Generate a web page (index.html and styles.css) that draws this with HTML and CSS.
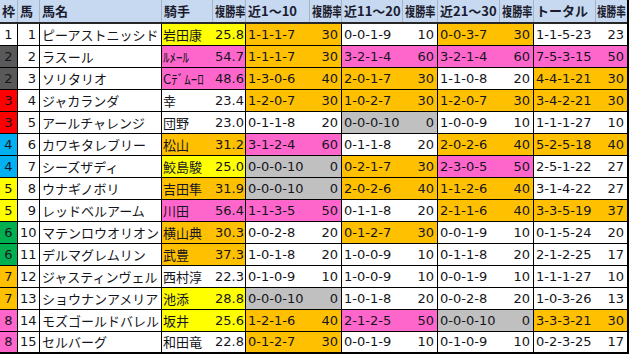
FILE: index.html
```html
<!DOCTYPE html>
<html lang="ja">
<head>
<meta charset="utf-8">
<title>出走表</title>
<link rel="stylesheet" href="styles.css">
</head>
<body>
<div class="sheet">
  <div class="row head">
    <span class="c">枠</span><span class="c">馬</span><span class="c">馬名</span><span class="c">騎手</span><span class="c"><span class="sq">複勝率</span></span><span class="c">近1～10</span><span class="c"><span class="sq">複勝率</span></span><span class="c">近11～20</span><span class="c"><span class="sq">複勝率</span></span><span class="c">近21～30</span><span class="c"><span class="sq">複勝率</span></span><span class="c">トータル</span><span class="c last"><span class="sq">複勝率</span></span>
  </div>
  <div class="row">
    <span class="c fr f1">1</span><span class="c no">1</span><span class="c nm">ピーアストニッシド</span><span class="c jk y">岩田康</span><span class="c pct y">25.8</span><span class="c rec o">1-1-1-7</span><span class="c pct o">30</span><span class="c rec">0-0-1-9</span><span class="c pct">10</span><span class="c rec o">0-0-3-7</span><span class="c pct o">30</span><span class="c rec">1-1-5-23</span><span class="c pct last">23</span>
  </div>
  <div class="row">
    <span class="c fr f2">2</span><span class="c no">2</span><span class="c nm">ラスール</span><span class="c jk p">ﾙﾒｰﾙ</span><span class="c pct p">54.7</span><span class="c rec o">1-1-1-7</span><span class="c pct o">30</span><span class="c rec p">3-2-1-4</span><span class="c pct p">60</span><span class="c rec p">3-2-1-4</span><span class="c pct p">60</span><span class="c rec p">7-5-3-15</span><span class="c pct p last">50</span>
  </div>
  <div class="row">
    <span class="c fr f2">2</span><span class="c no">3</span><span class="c nm">ソリタリオ</span><span class="c jk p">Cﾃﾞﾑｰﾛ</span><span class="c pct p">48.6</span><span class="c rec o">1-3-0-6</span><span class="c pct o">40</span><span class="c rec o">2-0-1-7</span><span class="c pct o">30</span><span class="c rec">1-1-0-8</span><span class="c pct">20</span><span class="c rec o">4-4-1-21</span><span class="c pct o last">30</span>
  </div>
  <div class="row">
    <span class="c fr f3">3</span><span class="c no">4</span><span class="c nm">ジャカランダ</span><span class="c jk">幸</span><span class="c pct">23.4</span><span class="c rec o">1-2-0-7</span><span class="c pct o">30</span><span class="c rec o">1-0-2-7</span><span class="c pct o">30</span><span class="c rec o">1-2-0-7</span><span class="c pct o">30</span><span class="c rec o">3-4-2-21</span><span class="c pct o last">30</span>
  </div>
  <div class="row">
    <span class="c fr f3">3</span><span class="c no">5</span><span class="c nm">アールチャレンジ</span><span class="c jk">団野</span><span class="c pct">23.0</span><span class="c rec">0-1-1-8</span><span class="c pct">20</span><span class="c rec g">0-0-0-10</span><span class="c pct g">0</span><span class="c rec">1-0-0-9</span><span class="c pct">10</span><span class="c rec">1-1-1-27</span><span class="c pct last">10</span>
  </div>
  <div class="row">
    <span class="c fr f4">4</span><span class="c no">6</span><span class="c nm">カワキタレブリー</span><span class="c jk o">松山</span><span class="c pct o">31.2</span><span class="c rec p">3-1-2-4</span><span class="c pct p">60</span><span class="c rec">0-1-1-8</span><span class="c pct">20</span><span class="c rec o">2-0-2-6</span><span class="c pct o">40</span><span class="c rec o">5-2-5-18</span><span class="c pct o last">40</span>
  </div>
  <div class="row">
    <span class="c fr f4">4</span><span class="c no">7</span><span class="c nm">シーズザディ</span><span class="c jk y">鮫島駿</span><span class="c pct y">25.0</span><span class="c rec g">0-0-0-10</span><span class="c pct g">0</span><span class="c rec o">0-2-1-7</span><span class="c pct o">30</span><span class="c rec p">2-3-0-5</span><span class="c pct p">50</span><span class="c rec">2-5-1-22</span><span class="c pct last">27</span>
  </div>
  <div class="row">
    <span class="c fr f5">5</span><span class="c no">8</span><span class="c nm">ウナギノボリ</span><span class="c jk o">吉田隼</span><span class="c pct o">31.9</span><span class="c rec g">0-0-0-10</span><span class="c pct g">0</span><span class="c rec o">2-0-2-6</span><span class="c pct o">40</span><span class="c rec o">1-1-2-6</span><span class="c pct o">40</span><span class="c rec">3-1-4-22</span><span class="c pct last">27</span>
  </div>
  <div class="row">
    <span class="c fr f5">5</span><span class="c no">9</span><span class="c nm">レッドベルアーム</span><span class="c jk p">川田</span><span class="c pct p">56.4</span><span class="c rec p">1-1-3-5</span><span class="c pct p">50</span><span class="c rec">0-1-1-8</span><span class="c pct">20</span><span class="c rec o">2-1-1-6</span><span class="c pct o">40</span><span class="c rec o">3-3-5-19</span><span class="c pct o last">37</span>
  </div>
  <div class="row">
    <span class="c fr f6">6</span><span class="c no">10</span><span class="c nm">マテンロウオリオン</span><span class="c jk o">横山典</span><span class="c pct o">30.3</span><span class="c rec">0-0-2-8</span><span class="c pct">20</span><span class="c rec o">0-1-2-7</span><span class="c pct o">30</span><span class="c rec">0-0-1-9</span><span class="c pct">10</span><span class="c rec">0-1-5-24</span><span class="c pct last">20</span>
  </div>
  <div class="row">
    <span class="c fr f6">6</span><span class="c no">11</span><span class="c nm">デルマグレムリン</span><span class="c jk o">武豊</span><span class="c pct o">37.3</span><span class="c rec">1-0-1-8</span><span class="c pct">20</span><span class="c rec">1-0-0-9</span><span class="c pct">10</span><span class="c rec">0-1-1-8</span><span class="c pct">20</span><span class="c rec">2-1-2-25</span><span class="c pct last">17</span>
  </div>
  <div class="row">
    <span class="c fr f7">7</span><span class="c no">12</span><span class="c nm">ジャスティンヴェル</span><span class="c jk">西村淳</span><span class="c pct">22.3</span><span class="c rec">0-1-0-9</span><span class="c pct">10</span><span class="c rec">1-0-0-9</span><span class="c pct">10</span><span class="c rec">0-0-1-9</span><span class="c pct">10</span><span class="c rec">1-1-1-27</span><span class="c pct last">10</span>
  </div>
  <div class="row">
    <span class="c fr f7">7</span><span class="c no">13</span><span class="c nm">ショウナンアメリア</span><span class="c jk y">池添</span><span class="c pct y">28.8</span><span class="c rec g">0-0-0-10</span><span class="c pct g">0</span><span class="c rec">1-0-1-8</span><span class="c pct">20</span><span class="c rec">0-0-2-8</span><span class="c pct">20</span><span class="c rec">1-0-3-26</span><span class="c pct last">13</span>
  </div>
  <div class="row">
    <span class="c fr f8">8</span><span class="c no">14</span><span class="c nm">モズゴールドバレル</span><span class="c jk y">坂井</span><span class="c pct y">25.6</span><span class="c rec o">1-2-1-6</span><span class="c pct o">40</span><span class="c rec p">2-1-2-5</span><span class="c pct p">50</span><span class="c rec g">0-0-0-10</span><span class="c pct g">0</span><span class="c rec o">3-3-3-21</span><span class="c pct o last">30</span>
  </div>
  <div class="row end">
    <span class="c fr f8">8</span><span class="c no">15</span><span class="c nm">セルバーグ</span><span class="c jk">和田竜</span><span class="c pct">22.8</span><span class="c rec o">0-1-2-7</span><span class="c pct o">30</span><span class="c rec">0-0-1-9</span><span class="c pct">10</span><span class="c rec">0-1-0-9</span><span class="c pct">10</span><span class="c rec">0-2-3-25</span><span class="c pct last">17</span>
  </div>
</div>
</body>
</html>
```

FILE: styles.css
```css
html, body {
  margin: 0;
  padding: 0;
  background: #ffffff;
}

.sheet {
  width: max-content;
  border-right: 2px solid #000;
  font-family: "Noto Sans CJK JP", "DejaVu Sans", sans-serif;
  font-size: 13px;
  color: #151520;
}

.row {
  display: grid;
  grid-template-columns: 18px 22px 122px 51px 33px 64px 32px 61px 35px 62px 34px 62px 31px;
  height: 21px;
  border-bottom: 1px solid #000;
  box-sizing: content-box;
  background: #fff;
}

.row.end {
  height: 20px;
  border-bottom: 2px solid #000;
}

.c {
  box-sizing: border-box;
  border-right: 1px solid #000;
  line-height: 21px;
  height: 100%;
  white-space: nowrap;
  overflow: hidden;
  padding: 0 2px;
}

.row.end .c {
  line-height: 20px;
}

.c.last {
  border-right: none;
}

/* header */
.head {
  height: 22px;
  background: #c6d9f0;
  border-bottom: 2px solid #262626;
}

.head .c {
  border-right: 1px solid #a3b4c8;
  font-weight: 700;
  line-height: 22px;
  color: #1b1b2e;
  padding: 0 0 0 2px;
}

.head .c.last {
  border-right: none;
  padding-left: 1px;
}

.sq {
  display: inline-block;
  width: 39px;
  transform: scaleX(0.78);
  transform-origin: left center;
  margin-right: -12px;
}

.last .sq {
  transform: scaleX(0.74);
}

/* body cells */
.fr {
  text-align: center;
  font-family: "DejaVu Sans", sans-serif;
  padding: 0;
}

.no {
  text-align: right;
  font-family: "DejaVu Sans", sans-serif;
  padding-right: 3px;
}

.nm {
  padding-left: 2px;
}

.jk {
  border-right: none;
  padding-left: 1px;
}

.pct {
  text-align: right;
  font-family: "DejaVu Sans", sans-serif;
  padding-right: 3px;
}

.rec {
  border-right: none;
  font-family: "DejaVu Sans", sans-serif;
  padding-left: 2px;
}

/* fills */
.y { background: #ffff00; }
.o { background: #ffc000; }
.p { background: #ff66cc; }
.g { background: #c0c0c0; }

.f1 { background: #ffffff; }
.f2 { background: #595959; }
.f3 { background: #ff0000; }
.f4 { background: #00b0f0; }
.f5 { background: #ffff00; }
.f6 { background: #00b050; }
.f7 { background: #ffc000; }
.f8 { background: #ff66cc; }
```
